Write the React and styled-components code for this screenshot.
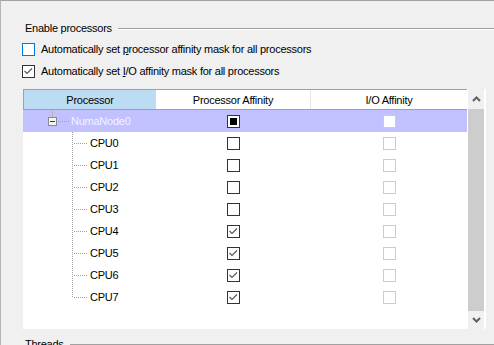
import React from 'react';
import styled, { createGlobalStyle } from 'styled-components';

const GlobalStyle = createGlobalStyle`
  html, body {
    margin: 0;
    padding: 0;
    background: #f0f0f0;
  }
  body {
    font-family: "Liberation Sans", Arial, sans-serif;
    font-size: 11px;
    letter-spacing: -0.25px;
    color: #000;
  }
`;

const Page = styled.div`
  box-sizing: border-box;
  width: 494px;
  height: 345px;
  overflow: hidden;
  border-top: 1px solid #a0a0a0;
  border-left: 1px solid #b4b4b4;
  padding: 20px 0 0 21px;
`;

const Legend = styled.div`
  display: flex;
  align-items: center;
  height: 14px;
  margin-left: 3px;
  gap: 6px;
  margin-top: ${props => props.top || 0}px;

  span {
    white-space: nowrap;
    line-height: 14px;
  }

  &::after {
    content: '';
    flex: 1;
    height: 1px;
    background: #a0a0a0;
    box-shadow: 0 1px 0 #fff;
  }
`;

const CheckList = styled.div`
  margin-top: 3px;
`;

const CheckRow = styled.label`
  display: flex;
  align-items: flex-start;
  height: 22px;
  gap: 6px;

  span {
    line-height: 22px;
    white-space: nowrap;
  }
`;

const Box = styled.div`
  box-sizing: border-box;
  width: 13px;
  height: 13px;
  margin-top: ${props => props.offset || 0}px;
  border: 1px solid ${props => (props.hot ? '#0078d7' : props.disabled ? '#cccccc' : '#333333')};
  background: #fff;
  display: flex;
  align-items: center;
  justify-content: center;
  flex-shrink: 0;
`;

const Mixed = styled.div`
  width: 7px;
  height: 7px;
  background: #000;
`;

const Key = styled.u`
  text-decoration: underline;
  text-underline-offset: 1px;
`;

const Grid = styled.div`
  display: flex;
  width: 463px;
  height: 240px;
  margin-top: 7px;
  margin-left: 1px;
  background: #fff;
`;

const GridBody = styled.div`
  width: 444px;
  display: flex;
  flex-direction: column;
`;

const Header = styled.div`
  display: grid;
  grid-template-columns: 132px 155px 156px;
  height: 19px;
  border: 1px solid #a0a0a0;
  border-right: none;
`;

const HeaderCell = styled.div`
  display: flex;
  align-items: center;
  justify-content: center;
  background: ${props => (props.active ? '#bcdcf4' : '#fff')};
  border-right: ${props => (props.divider ? '1px solid #e5e5e5' : 'none')};
  white-space: nowrap;
`;

const Row = styled.div`
  display: grid;
  grid-template-columns: 133px 155px 156px;
  height: 22px;
  background: ${props => (props.selected ? '#c1c1ff' : 'transparent')};
  color: ${props => (props.selected ? '#f2f2ff' : '#000')};
`;

const NameCell = styled.div`
  display: flex;
  align-items: center;
  white-space: nowrap;

  svg {
    flex-shrink: 0;
    align-self: stretch;
  }
`;

const CheckCell = styled.div`
  display: flex;
  align-items: center;
  justify-content: center;
  padding-right: ${props => props.pad || 0}px;
`;

const Scrollbar = styled.div`
  display: flex;
  flex-direction: column;
  width: 16px;
  margin: 0 2px 0 1px;
  background: #f0f0f0;
`;

const ArrowButton = styled.div`
  height: ${props => props.h}px;
  display: flex;
  align-items: center;
  justify-content: center;
  flex-shrink: 0;
`;

const Thumb = styled.div`
  flex: 1;
  background: #cdcdcd;
`;

const Checkmark = () => (
  <svg width="11" height="11" viewBox="0 0 11 11">
    <polyline points="1.5,5 4,7.5 9,2.5" fill="none" stroke="#555" strokeWidth="1.1" />
  </svg>
);

const CheckBox = ({ state, disabled, hot, offset }) => (
  <Box disabled={disabled} hot={hot} offset={offset}>
    {state === 'checked' && <Checkmark />}
    {state === 'mixed' && <Mixed />}
  </Box>
);

const NodeLines = () => (
  <svg width="48" height="22" viewBox="0 0 48 22">
    <line x1="29.5" y1="0" x2="29.5" y2="7" stroke="#a0a0a0" strokeDasharray="1 1" />
    <rect x="25.5" y="7.5" width="8" height="8" fill="#f4f4f4" stroke="#8a8a8a" />
    <line x1="27" y1="11.5" x2="32" y2="11.5" stroke="#2a3a6a" />
    <line x1="35" y1="11.5" x2="46" y2="11.5" stroke="#a0a0a0" strokeDasharray="1 1" />
  </svg>
);

const LeafLines = ({ last }) => (
  <svg width="67" height="22" viewBox="0 0 67 22">
    <line x1="49.5" y1="0" x2="49.5" y2={last ? 12 : 22} stroke="#a0a0a0" strokeDasharray="1 1" />
    <line x1="51" y1="11.5" x2="65" y2="11.5" stroke="#a0a0a0" strokeDasharray="1 1" />
  </svg>
);

const Chevron = ({ down }) => (
  <svg width="9" height="6" viewBox="0 0 9 6">
    <polyline
      points={down ? '1,1 4.5,4.5 8,1' : '1,5 4.5,1.5 8,5'}
      fill="none"
      stroke="#606060"
      strokeWidth="2"
    />
  </svg>
);

const cpus = [0, 1, 2, 3, 4, 5, 6, 7].map(n => ({
  name: `CPU${n}`,
  affinity: n >= 4 ? 'checked' : 'none',
}));

const App = () => (
  <>
    <GlobalStyle />
    <Page>
      <Legend>
        <span>Enable processors</span>
      </Legend>
      <CheckList>
        <CheckRow>
          <CheckBox hot offset={5} />
          <span>
            Automatically set <Key>p</Key>rocessor affinity mask for all processors
          </span>
        </CheckRow>
        <CheckRow>
          <CheckBox state="checked" offset={5} />
          <span>
            Automatically set <Key>I</Key>/O affinity mask for all processors
          </span>
        </CheckRow>
      </CheckList>

      <Grid>
        <GridBody>
          <Header>
            <HeaderCell active>Processor</HeaderCell>
            <HeaderCell divider>Processor Affinity</HeaderCell>
            <HeaderCell>I/O Affinity</HeaderCell>
          </Header>
          <Row selected>
            <NameCell>
              <NodeLines />
              NumaNode0
            </NameCell>
            <CheckCell pad={1}>
              <CheckBox state="mixed" />
            </CheckCell>
            <CheckCell>
              <CheckBox disabled />
            </CheckCell>
          </Row>
          {cpus.map((cpu, i) => (
            <Row key={cpu.name}>
              <NameCell>
                <LeafLines last={i === cpus.length - 1} />
                {cpu.name}
              </NameCell>
              <CheckCell pad={1}>
                <CheckBox state={cpu.affinity} />
              </CheckCell>
              <CheckCell>
                <CheckBox disabled />
              </CheckCell>
            </Row>
          ))}
        </GridBody>
        <Scrollbar>
          <ArrowButton h={20}>
            <Chevron />
          </ArrowButton>
          <Thumb />
          <ArrowButton h={18}>
            <Chevron down />
          </ArrowButton>
        </Scrollbar>
      </Grid>

      <Legend top={8}>
        <span>Threads</span>
      </Legend>
    </Page>
  </>
);

export default App;
